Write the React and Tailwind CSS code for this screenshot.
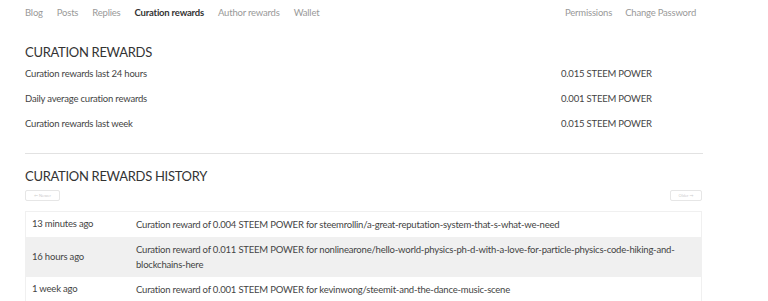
const navLeft = ["Blog", "Posts", "Replies", "Curation rewards", "Author rewards", "Wallet"];
const navRight = ["Permissions", "Change Password"];

const summary = [
  ["Curation rewards last 24 hours", "0.015 STEEM POWER"],
  ["Daily average curation rewards", "0.001 STEEM POWER"],
  ["Curation rewards last week", "0.015 STEEM POWER"],
];

const history = [
  ["13 minutes ago", "Curation reward of 0.004 STEEM POWER for steemrollin/a-great-reputation-system-that-s-what-we-need"],
  ["16 hours ago", "Curation reward of 0.011 STEEM POWER for nonlinearone/hello-world-physics-ph-d-with-a-love-for-particle-physics-code-hiking-and-blockchains-here"],
  ["1 week ago", "Curation reward of 0.001 STEEM POWER for kevinwong/steemit-and-the-dance-music-scene"],
];

export default function App() {
  return (
    <div className="w-[768px] h-[301px] overflow-hidden bg-white font-['Lato','Liberation_Sans',sans-serif] text-[#333] tracking-[-0.2px]">
      <div className="w-[678px] ml-[25px]">
        <div className="flex justify-between items-center h-[27px] text-[9.5px] text-[#999]">
          <div className="flex gap-[14px]">
            {navLeft.map((n) => (
              <span key={n} className={n === "Curation rewards" ? "font-bold text-[#333]" : ""}>
                {n}
              </span>
            ))}
          </div>
          <div className="flex gap-[13px] mr-[7px]">
            {navRight.map((n) => (
              <span key={n}>{n}</span>
            ))}
          </div>
        </div>

        <h2 className="mt-[16px] text-[13px] leading-[18px] tracking-[-0.3px] text-[#333]">CURATION REWARDS</h2>
        <div className="mt-[1px] text-[9.5px] text-[#444]">
          {summary.map(([label, value]) => (
            <div key={label} className="flex h-[25px] items-center">
              <span className="w-[536px]">{label}</span>
              <span>{value}</span>
            </div>
          ))}
        </div>

        <div className="mt-[16px] border-t border-[#e2e2e2]" />

        <h2 className="mt-[13px] text-[13px] leading-[18px] tracking-[-0.3px] text-[#333]">CURATION REWARDS HISTORY</h2>
        <div className="flex justify-between mt-[5px]">
          <button className="h-[11px] w-[35px] border border-[#e6e6e6] rounded-[2px] text-[4px] text-[#ccc] leading-none tracking-normal">
            ← Newer
          </button>
          <button className="h-[11px] w-[32px] border border-[#e6e6e6] rounded-[2px] text-[4px] text-[#ccc] leading-none tracking-normal mr-[1px]">
            Older →
          </button>
        </div>

        <div className="mt-[10px] w-[677px] border border-[#f0f0f0] text-[9.5px] text-[#444]">
          {history.map(([time, desc], i) => (
            <div
              key={time}
              className={"flex items-center px-[6px] py-[5px] " + (i % 2 === 1 ? "bg-[#f0f0f0]" : "")}
            >
              <span className="w-[104px] shrink-0">{time}</span>
              <span className="leading-[15px]">{desc}</span>
            </div>
          ))}
        </div>
      </div>
    </div>
  );
}
